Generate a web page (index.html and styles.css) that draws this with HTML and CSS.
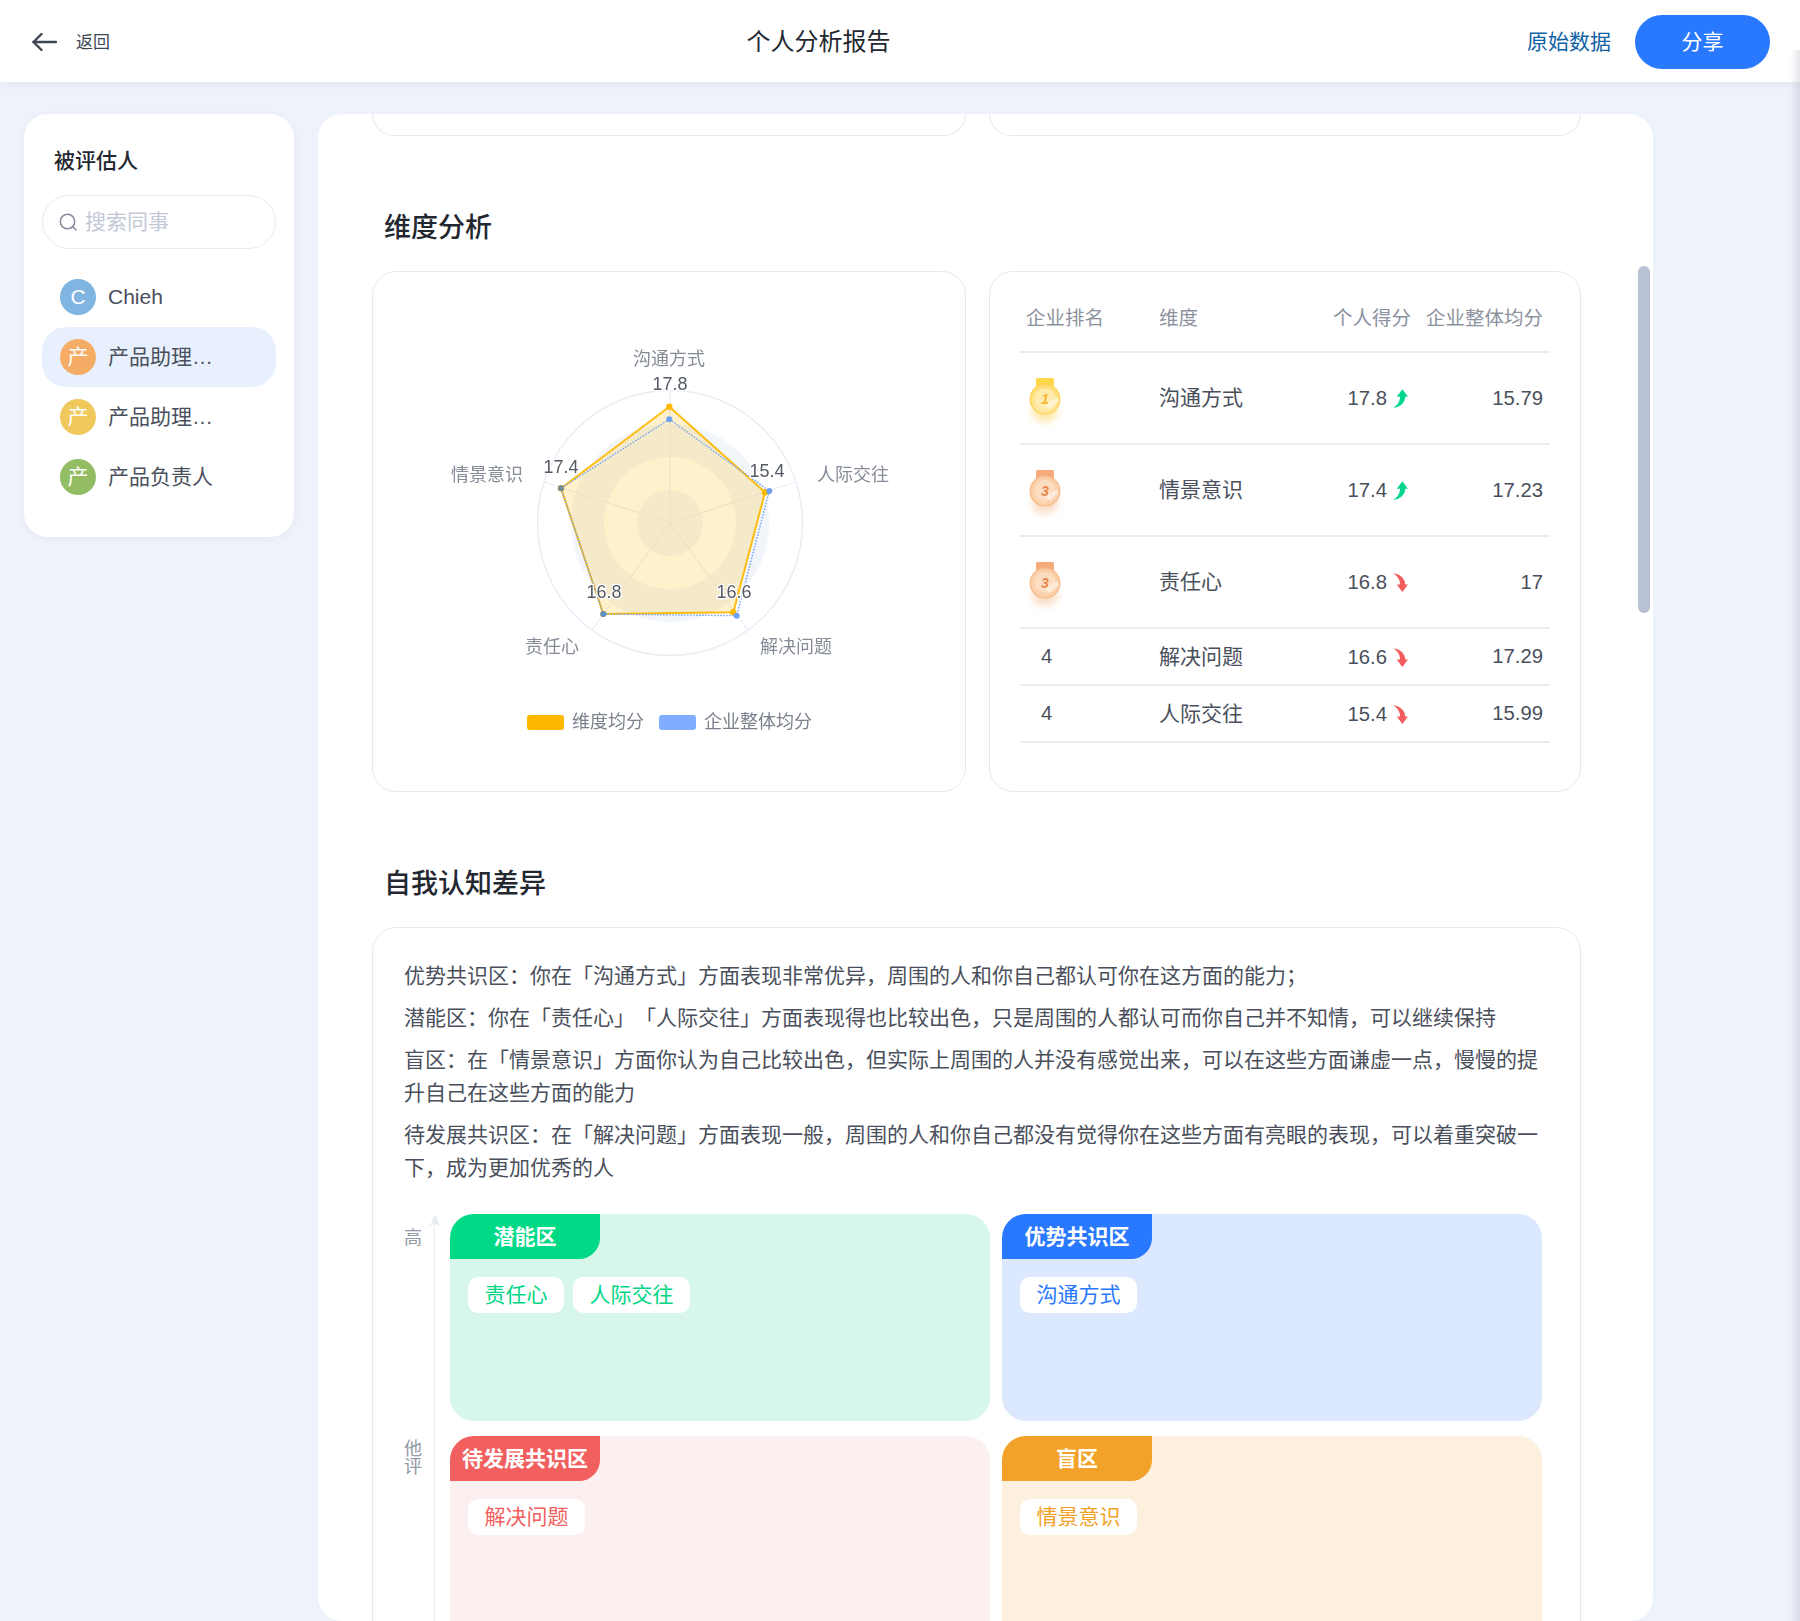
FILE: index.html
```html
<!DOCTYPE html>
<html lang="zh-CN">
<head>
<meta charset="UTF-8" />
<meta name="viewport" content="width=device-width, initial-scale=1" />
<title>个人分析报告</title>
<link rel="stylesheet" href="styles.css">
</head>
<body>

<!-- shared icons -->
<svg class="svg-defs" aria-hidden="true">
  <defs>
    <linearGradient id="goldFace" x1="0" y1="0" x2="0" y2="1">
      <stop offset="0" stop-color="#ffdc6e"/>
      <stop offset="1" stop-color="#ffe9a6"/>
    </linearGradient>
    <linearGradient id="bronzeFace" x1="0" y1="0" x2="0" y2="1">
      <stop offset="0" stop-color="#f9cfa8"/>
      <stop offset="1" stop-color="#fbd3ad"/>
    </linearGradient>
    <filter id="medalGlow" x="-50%" y="-50%" width="200%" height="200%">
      <feGaussianBlur stdDeviation="3.5"/>
    </filter>
    <symbol id="medal-gold" viewBox="0 0 40 50">
      <ellipse cx="20" cy="33" rx="13" ry="11" fill="#ffd768" opacity=".55" filter="url(#medalGlow)"/>
      <path d="M11 1.5 Q11 0 12.5 0 H27.5 Q29 0 29 1.5 V12 H11 Z" fill="#ffd84a"/>
      <circle cx="20" cy="21" r="15.5" fill="#ffd35c"/>
      <circle cx="20" cy="21" r="14" fill="url(#goldFace)"/>
      <circle cx="20" cy="20.5" r="10.5" fill="#fff0bd" opacity=".7"/>
      <path d="M20 27 L32 19 L34 23 L25 31 Z" fill="#fff" opacity=".45"/>
      <text x="20" y="26" class="medal-num medal-num-gold">1</text>
    </symbol>
    <symbol id="medal-bronze" viewBox="0 0 40 50">
      <ellipse cx="20" cy="33" rx="13" ry="11" fill="#f7c39a" opacity=".55" filter="url(#medalGlow)"/>
      <path d="M11 1.5 Q11 0 12.5 0 H27.5 Q29 0 29 1.5 V12 H11 Z" fill="#f6aa7c"/>
      <circle cx="20" cy="21" r="15.5" fill="#f7bd8e"/>
      <circle cx="20" cy="21" r="14" fill="url(#bronzeFace)"/>
      <circle cx="20" cy="20.5" r="10.5" fill="#fce3cc" opacity=".7"/>
      <path d="M20 27 L32 19 L34 23 L25 31 Z" fill="#fff" opacity=".45"/>
      <text x="20" y="26" class="medal-num medal-num-bronze">3</text>
    </symbol>
    <symbol id="arrow-up" viewBox="0 0 16 20">
      <path d="M10 0 L16 8 L13 8 C13 14 8 19 0 20 C5 17 7.5 13 7.5 8 L4 8 Z"/>
    </symbol>
    <symbol id="arrow-down" viewBox="0 0 16 20">
      <path d="M10 20 L16 12 L13 12 C13 6 8 1 0 0 C5 3 7.5 7 7.5 12 L4 12 Z"/>
    </symbol>
  </defs>
</svg>

<header class="topbar">
  <a class="back-link" href="#">
    <svg class="back-icon" viewBox="0 0 25 18" fill="none" stroke="currentColor" stroke-width="2.4" stroke-linecap="round" stroke-linejoin="round">
      <path d="M1.5 9 H24"/>
      <path d="M9.5 1 L1.5 9 L9.5 17"/>
    </svg>
    <span>返回</span>
  </a>
  <div class="topbar-title">个人分析报告</div>
  <div class="topbar-actions">
    <a class="raw-link" href="#">原始数据</a>
    <button class="share-btn">分享</button>
  </div>
</header>

<div class="layout">

  <aside class="sidebar">
    <div class="sidebar-title">被评估人</div>
    <div class="search-box">
      <svg class="search-icon" viewBox="0 0 18 18" fill="none" stroke="currentColor" stroke-width="1.6" stroke-linecap="round">
        <circle cx="8.5" cy="8.5" r="7.2"/>
        <path d="M14 14 L17 17"/>
      </svg>
      <span>搜索同事</span>
    </div>
    <div class="person">
      <span class="avatar avatar-blue">C</span>
      <span class="person-name">Chieh</span>
    </div>
    <div class="person active">
      <span class="avatar avatar-orange">产</span>
      <span class="person-name">产品助理…</span>
    </div>
    <div class="person">
      <span class="avatar avatar-yellow">产</span>
      <span class="person-name">产品助理…</span>
    </div>
    <div class="person">
      <span class="avatar avatar-green">产</span>
      <span class="person-name">产品负责人</span>
    </div>
  </aside>

  <main class="report">
    <div class="scroll-thumb"></div>

    <div class="card-row stub-row">
      <div class="card stub"></div>
      <div class="card stub"></div>
    </div>

    <h2 class="section-title">维度分析</h2>
    <div class="card-row">
      <div class="card chart-card">
        <svg class="radar" viewBox="373 272 592 519">
          <circle cx="670" cy="523" r="132.5" fill="#fff" stroke="#e9edf5" stroke-width="1.5"/>
          <circle cx="670" cy="523" r="99" fill="#f2f5fa"/>
          <circle cx="670" cy="523" r="66" fill="#fff"/>
          <circle cx="670" cy="523" r="33" fill="#f2f5fa"/>
          <g stroke="#e9edf5" stroke-width="1.2">
            <line x1="670" y1="523" x2="670" y2="390.5"/>
            <line x1="670" y1="523" x2="796" y2="482"/>
            <line x1="670" y1="523" x2="748" y2="630"/>
            <line x1="670" y1="523" x2="592" y2="630"/>
            <line x1="670" y1="523" x2="544" y2="482"/>
          </g>

          <polygon points="669.3,406.7 765,492.3 733.3,612.3 603.3,614 561,488.3" fill="#ffb800" fill-opacity=".2" stroke="#ffbd14" stroke-width="2"/>
          <g fill="#ffb800">
            <circle cx="669.3" cy="406.7" r="3.2"/>
            <circle cx="765" cy="492.3" r="3.2"/>
            <circle cx="733.3" cy="612.3" r="3.2"/>
            <circle cx="603.3" cy="614" r="3.2"/>
            <circle cx="561" cy="488.3" r="3.2"/>
          </g>
          <polygon points="669.3,419.3 769.3,491 736.7,615.7 603.3,614 561,488.3" fill="none" stroke="#6ea2f5" stroke-width="1.4" stroke-dasharray="1.5 1.5"/>
          <g fill="#6ea2f5">
            <circle cx="669.3" cy="419.3" r="3"/>
            <circle cx="769.3" cy="491" r="3"/>
            <circle cx="736.7" cy="615.7" r="3"/>
            <circle cx="603.3" cy="614" r="3" fill="#5b93c8"/>
            <circle cx="561" cy="488.3" r="3" fill="#6f8c96"/>
          </g>

          <g class="radar-label">
            <text x="669" y="365">沟通方式</text>
            <text x="487" y="481">情景意识</text>
            <text x="853" y="481">人际交往</text>
            <text x="552" y="653">责任心</text>
            <text x="796" y="653">解决问题</text>
          </g>
          <g class="radar-value">
            <text x="670" y="390">17.8</text>
            <text x="561" y="473">17.4</text>
            <text x="767" y="477">15.4</text>
            <text x="604" y="598">16.8</text>
            <text x="734" y="598">16.6</text>
          </g>

          <rect x="527" y="715" width="37" height="15" rx="3" fill="#ffb800"/>
          <text x="572" y="727.5" class="radar-legend">维度均分</text>
          <rect x="659" y="715" width="37" height="15" rx="3" fill="#7fadff"/>
          <text x="704" y="727.5" class="radar-legend">企业整体均分</text>
        </svg>
      </div>

      <div class="card table-card">
        <table class="rank-table">
          <thead>
            <tr>
              <th class="col-rank">企业排名</th>
              <th class="col-name">维度</th>
              <th class="col-score">个人得分</th>
              <th class="col-avg">企业整体均分</th>
            </tr>
          </thead>
          <tbody>
            <tr class="tall">
              <td><svg class="medal"><use href="#medal-gold"/></svg></td>
              <td>沟通方式</td>
              <td class="col-score"><span class="num">17.8</span><svg class="trend up"><use href="#arrow-up"/></svg></td>
              <td class="col-avg num">15.79</td>
            </tr>
            <tr class="tall">
              <td><svg class="medal"><use href="#medal-bronze"/></svg></td>
              <td>情景意识</td>
              <td class="col-score"><span class="num">17.4</span><svg class="trend up"><use href="#arrow-up"/></svg></td>
              <td class="col-avg num">17.23</td>
            </tr>
            <tr class="tall">
              <td><svg class="medal"><use href="#medal-bronze"/></svg></td>
              <td>责任心</td>
              <td class="col-score"><span class="num">16.8</span><svg class="trend down"><use href="#arrow-down"/></svg></td>
              <td class="col-avg num">17</td>
            </tr>
            <tr>
              <td class="rank-num num">4</td>
              <td>解决问题</td>
              <td class="col-score"><span class="num">16.6</span><svg class="trend down"><use href="#arrow-down"/></svg></td>
              <td class="col-avg num">17.29</td>
            </tr>
            <tr>
              <td class="rank-num num">4</td>
              <td>人际交往</td>
              <td class="col-score"><span class="num">15.4</span><svg class="trend down"><use href="#arrow-down"/></svg></td>
              <td class="col-avg num">15.99</td>
            </tr>
          </tbody>
        </table>
      </div>
    </div>

    <h2 class="section-title">自我认知差异</h2>
    <div class="card gap-card">
      <p>优势共识区：你在「沟通方式」方面表现非常优异，周围的人和你自己都认可你在这方面的能力；</p>
      <p>潜能区：你在「责任心」「人际交往」方面表现得也比较出色，只是周围的人都认可而你自己并不知情，可以继续保持</p>
      <p>盲区：在「情景意识」方面你认为自己比较出色，但实际上周围的人并没有感觉出来，可以在这些方面谦虚一点，慢慢的提升自己在这些方面的能力</p>
      <p>待发展共识区：在「解决问题」方面表现一般，周围的人和你自己都没有觉得你在这些方面有亮眼的表现，可以着重突破一下，成为更加优秀的人</p>

      <div class="matrix">
        <div class="axis">
          <span class="axis-high">高</span>
          <span class="axis-name">他<br>评</span>
          <svg class="axis-arrow" viewBox="0 0 10 12"><path d="M5 0 L10 12 L5 9.5 L0 12 Z"/></svg>
        </div>
        <div class="quad-grid">
          <div class="quad quad-green">
            <div class="quad-tab">潜能区</div>
            <div class="quad-tags"><span class="tag">责任心</span><span class="tag">人际交往</span></div>
          </div>
          <div class="quad quad-blue">
            <div class="quad-tab">优势共识区</div>
            <div class="quad-tags"><span class="tag">沟通方式</span></div>
          </div>
          <div class="quad quad-red">
            <div class="quad-tab">待发展共识区</div>
            <div class="quad-tags"><span class="tag">解决问题</span></div>
          </div>
          <div class="quad quad-orange">
            <div class="quad-tab">盲区</div>
            <div class="quad-tags"><span class="tag">情景意识</span></div>
          </div>
        </div>
      </div>
    </div>
  </main>

</div>

<div class="edge-shadow"></div>

</body>
</html>
```

FILE: styles.css
```css
* {
  box-sizing: border-box;
}
html, body {
  height: 100%;
}
body {
  margin: 0;
  height: 1621px;
  overflow: hidden;
  background: #eef2fa;
  color: #4a4f5c;
  font-family: "Liberation Sans", "Noto Sans CJK SC", sans-serif;
  font-size: 21px;
  line-height: 1.3;
  text-spacing-trim: space-all;
  display: flex;
  flex-direction: column;
}
a {
  text-decoration: none;
  color: inherit;
}
.svg-defs {
  position: absolute;
  width: 0;
  height: 0;
}
.edge-shadow {
  position: absolute;
  top: 50px;
  right: 0;
  bottom: 0;
  width: 10px;
  background: linear-gradient(to right, rgba(70,80,110,0), rgba(70,80,110,0.14));
  z-index: 3;
}

/* Top bar */
.topbar {
  flex: none;
  height: 82px;
  background: #fff;
  box-shadow: 0 1px 10px rgba(60,80,130,0.08);
  display: flex;
  justify-content: space-between;
  align-items: center;
  padding: 1px 30px 0 32px;
  position: relative;
  z-index: 2;
}
.back-link {
  display: flex;
  align-items: center;
  gap: 19px;
  color: #3c4654;
  font-size: 17px;
}
.back-link span {
  padding-top: 3px;
}
.back-icon {
  width: 25px;
  height: 18px;
}
.topbar-title {
  font-size: 24px;
  color: #23272f;
}
.topbar-actions {
  display: flex;
  align-items: center;
  gap: 24px;
}
.raw-link {
  color: #0f62a3;
}
.share-btn {
  width: 135px;
  height: 54px;
  border: none;
  border-radius: 27px;
  background: #2979ff;
  color: #fff;
  font: inherit;
}

/* Layout */
.layout {
  flex: 1;
  min-height: 0;
  display: flex;
  align-items: flex-start;
  gap: 24px;
  padding: 32px 147px 0 24px;
}

/* Sidebar */
.sidebar {
  flex: none;
  width: 270px;
  height: 423px;
  background: #fff;
  border-radius: 24px;
  padding: 33px 18px 0;
  box-shadow: 0 2px 10px rgba(60,80,130,0.05);
}
.sidebar-title {
  color: #23272f;
  font-weight: 500;
  line-height: 28px;
  padding-left: 12px;
}
.search-box {
  margin: 20px 0 18px;
  height: 54px;
  border: 1px solid #e8eaf1;
  border-radius: 27px;
  display: flex;
  align-items: center;
  gap: 8px;
  padding-left: 16px;
  color: #c2c8d6;
}
.search-icon {
  width: 18px;
  height: 18px;
  color: #868d99;
}
.person {
  height: 60px;
  display: flex;
  align-items: center;
  gap: 12px;
  padding-left: 18px;
  border-radius: 24px;
  color: #4a4f5c;
}
.person.active {
  background: #e8f0fe;
}
.avatar {
  width: 36px;
  height: 36px;
  border-radius: 50%;
  color: #fff;
  display: flex;
  align-items: center;
  justify-content: center;
}
.avatar-blue { background: #7fb5e0; }
.avatar-orange { background: #f5ad66; }
.avatar-yellow { background: #f0c85c; }
.avatar-green { background: #93bd63; }

/* Main report */
.report {
  flex: 1;
  min-width: 0;
  height: 100%;
  background: #fff;
  border-radius: 24px;
  padding: 0 72px 0 54px;
  position: relative;
  overflow: hidden;
}
.scroll-thumb {
  position: absolute;
  top: 152px;
  right: 3px;
  width: 12px;
  height: 347px;
  border-radius: 6px;
  background: #b9c2d4;
}
.card {
  background: #fff;
  border: 1px solid #e6e9f0;
  border-radius: 24px;
}
.card-row {
  display: grid;
  grid-template-columns: 594px 592px;
  gap: 23px;
  height: 521px;
}
.stub-row {
  height: 22px;
}
.stub {
  border-top: none;
  border-radius: 0 0 24px 24px;
}
.section-title {
  margin: 72px 0 23px;
  padding-left: 12px;
  color: #23272f;
  font-size: 27px;
  font-weight: 500;
  line-height: 40px;
}

/* Radar */
.radar {
  display: block;
  width: 100%;
  height: 100%;
  filter: blur(0.45px);
}
.radar text {
  font-size: 18px;
  font-family: "Liberation Sans", "Noto Sans CJK SC", sans-serif;
}
.radar-label text {
  fill: #858b97;
  text-anchor: middle;
}
.radar-value text {
  fill: #555a64;
  text-anchor: middle;
  stroke: #fff;
  stroke-width: 2.5px;
  paint-order: stroke;
}
.radar .radar-legend {
  fill: #7b818c;
}

/* Rank table */
.table-card {
  padding: 12px 30px 0;
}
.rank-table {
  width: 530px;
  table-layout: fixed;
  border-collapse: collapse;
}
.rank-table th, .rank-table td {
  padding: 0 6px;
  border-bottom: 2px solid #e9edf2;
  text-align: left;
  white-space: nowrap;
  height: 57px;
}
.rank-table th {
  height: 68px;
  padding-top: 2px;
  color: #8c929e;
  font-size: 19.5px;
  font-weight: 400;
}
.rank-table tr.tall td {
  height: 92px;
}
.rank-table .col-rank { width: 133px; }
.rank-table .col-name { width: 133px; }
.rank-table .col-score { width: 130px; text-align: right; }
.rank-table .col-avg { width: 134px; text-align: right; padding-right: 7px; }
.rank-table th.col-score { padding-right: 5px; }
.num {
  font-size: 20.3px;
}
.rank-table .rank-num {
  padding-left: 21px;
}
.medal {
  display: block;
  width: 40px;
  height: 50px;
  margin: 10px 0 0 -1px;
  filter: blur(0.3px);
}
.medal-num {
  font-size: 14px;
  font-weight: 700;
  font-style: italic;
  text-anchor: middle;
  font-family: "Liberation Sans", sans-serif;
}
.medal-num-gold { fill: #f5b52a; }
.medal-num-bronze { fill: #e8854a; }
.trend {
  width: 15px;
  height: 19px;
  margin: 0 2px 0 6px;
  vertical-align: -3px;
}
.trend.up { fill: #00d68f; }
.trend.down { fill: #f25c5c; }

/* Self perception */
.gap-card {
  padding: 31px 31px 0;
  height: 900px;
}
.gap-card p {
  margin: 0 0 9px;
  line-height: 33px;
}
.matrix {
  display: flex;
  margin-top: 30px;
}
.axis {
  flex: none;
  width: 46px;
  height: 420px;
  position: relative;
  color: #9299a6;
  font-size: 18px;
  line-height: 18px;
}
.axis::after {
  content: "";
  position: absolute;
  left: 30px;
  top: 4px;
  bottom: 0;
  border-left: 1px solid #e8ebf2;
}
.axis-high {
  position: absolute;
  left: 0;
  top: 15px;
  width: 18px;
}
.axis-name {
  position: absolute;
  left: 0;
  top: 226px;
  width: 18px;
}
.axis-arrow {
  position: absolute;
  left: 26px;
  top: 0;
  width: 10px;
  height: 12px;
  fill: #e8ebf2;
}
.quad-grid {
  flex: none;
  width: 1092px;
  display: grid;
  grid-template-columns: 540px 540px;
  grid-auto-rows: 207px;
  gap: 15px 12px;
}
.quad {
  border-radius: 24px;
  overflow: hidden;
}
.quad-tab {
  width: 150px;
  height: 45px;
  border-radius: 0 0 21px 0;
  color: #fff;
  font-weight: 700;
  display: flex;
  align-items: center;
  justify-content: center;
}
.quad-tags {
  display: flex;
  gap: 9px;
  padding: 18px 18px 0;
}
.tag {
  height: 36px;
  line-height: 36px;
  padding: 0 16.5px;
  background: #fff;
  border-radius: 10px;
}
.quad-green { background: #d6f7ea; color: #00d685; }
.quad-green .quad-tab { background: #00d985; }
.quad-blue { background: #dce8fe; color: #2979ff; }
.quad-blue .quad-tab { background: #2979ff; }
.quad-red { background: #fcefef; color: #f25f5f; }
.quad-red .quad-tab { background: #f25f5f; }
.quad-orange { background: #fdf0de; color: #f2a228; }
.quad-orange .quad-tab { background: #f2a228; }
```
